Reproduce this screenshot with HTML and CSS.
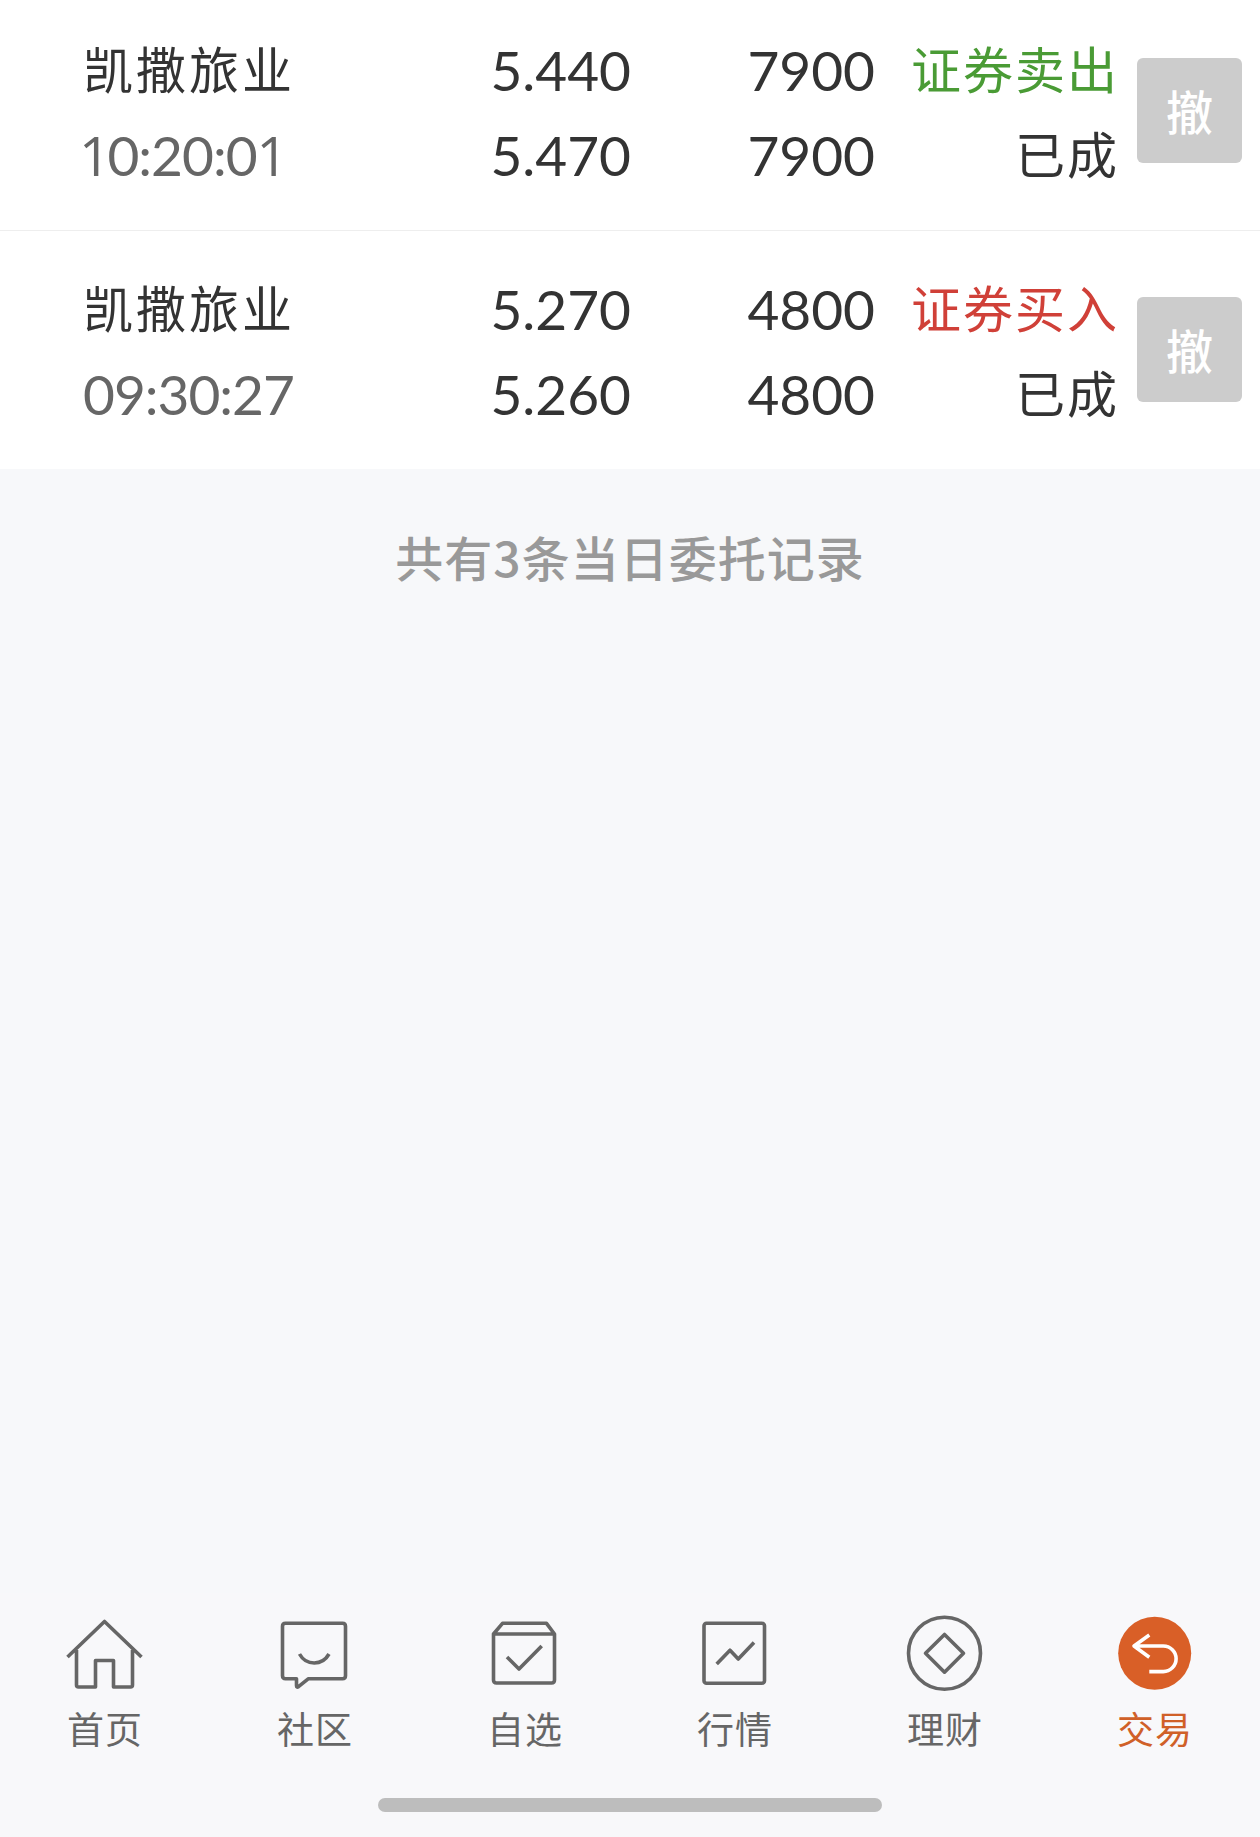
FILE: index.html
```html
<!DOCTYPE html>
<html lang="zh-CN">
<head>
	<meta charset="UTF-8">
	<title>当日委托</title>
	<link rel="stylesheet" href="styles.css">
</head>
<body>
	<div class="page">
		<ul class="order-list">
			<li class="order">
				<div class="col-name">
					<p class="name">凯撒旅业</p>
					<p class="time"><i class="one first">1</i>0:20:0<i class="one">1</i></p>
				</div>
				<div class="col-price">
					<p>5.440</p>
					<p>5.470</p>
				</div>
				<div class="col-num">
					<p>7900</p>
					<p>7900</p>
				</div>
				<div class="col-type">
					<p class="sell">证券卖出</p>
					<p>已成</p>
				</div>
				<button class="cancel">撤</button>
			</li>
			<li class="order">
				<div class="col-name">
					<p class="name">凯撒旅业</p>
					<p class="time">09:30:27</p>
				</div>
				<div class="col-price">
					<p>5.270</p>
					<p>5.260</p>
				</div>
				<div class="col-num">
					<p>4800</p>
					<p>4800</p>
				</div>
				<div class="col-type">
					<p class="buy">证券买入</p>
					<p>已成</p>
				</div>
				<button class="cancel">撤</button>
			</li>
		</ul>
		<p class="total">共有3条当日委托记录</p>

		<div class="footer">
			<div class="tabbar">
				<a class="tab">
					<svg class="icon" viewBox="0 0 80 80">
						<path d="M2.500 44L39.500 8.500L76.500 44M11.500 37V72Q11.500 74 13.500 74H30.500V47.500H48.500V74H65.500Q67.500 74 67.500 72V37"/>
					</svg>
					<span>首页</span>
				</a>
				<a class="tab">
					<svg class="icon" viewBox="0 0 80 80">
						<path d="M10.500 10.300H67.500Q70.500 10.300 70.500 13.300V62.700Q70.500 65.700 67.500 65.700H33.500L23.500 73.700Q21.500 75 21.500 72.500V65.700H10.500Q7.500 65.700 7.500 62.700V13.300Q7.500 10.300 10.500 10.300Z"/>
						<path d="M24.500 41Q29.500 50 39.200 50T54 41"/>
					</svg>
					<span>社区</span>
				</a>
				<a class="tab">
					<svg class="icon" viewBox="0 0 80 80">
						<path d="M8.500 21L17.500 10.300H61.500L69.500 21V67Q69.500 70 66.500 70H11.500Q8.500 70 8.500 67ZM8.500 21H69.500"/>
						<path d="M22 44L34 56L56.700 33"/>
					</svg>
					<span>自选</span>
				</a>
				<a class="tab">
					<svg class="icon" viewBox="0 0 80 80">
						<rect x="9" y="10.300" width="60.500" height="60" rx="2.500"/>
						<path d="M21.700 51L35 37.200L43.300 46L59 29.500"/>
					</svg>
					<span>行情</span>
				</a>
				<a class="tab">
					<svg class="icon" viewBox="0 0 80 80">
						<circle cx="39.500" cy="40.300" r="36"/>
						<path d="M39.500 21.500L58.500 40.300L39.500 59.200L20.500 40.300Z"/>
					</svg>
					<span>理财</span>
				</a>
				<a class="tab active">
					<svg class="icon" viewBox="0 0 80 80">
						<circle cx="39.700" cy="40.300" r="36.500"/>
						<path d="M34.300 22L19 33L34.300 44.300M19 33H48.300A12.800 12.800 0 0 1 48.300 58.600H34.300"/>
					</svg>
					<span>交易</span>
				</a>
			</div>
			<div class="home-bar"></div>
		</div>
	</div>
</body>
</html>
```
FILE: styles.css
```css
html,body,div,ul,li,p,a,span,i{
	padding: 0;
	margin: 0;
	border: 0;
}
body{
	background-color: #f7f8fa;
	color: #333;
	font-family: Lato, "Noto Sans CJK SC", sans-serif;
}
i{
	font-style: normal;
}
.page{
	display: flex;
	flex-direction: column;
	height: 1837px;
	overflow: hidden;
}
.order-list{
	list-style: none;
	background-color: #fff;
}
/* 委托记录 */
.order{
	display: flex;
	box-sizing: border-box;
	height: 238px;
	padding: 36px 18px 0 83px;
	font-size: 55px;
	line-height: 85px;
}
.order:first-child{
	height: 231px;
	padding-top: 28px;
	border-bottom: 1px solid #eee;
}
.col-name{
	width: 300px;
}
.name{
	font-size: 50px;
	letter-spacing: 3px;
}
.time{
	color: #666;
	letter-spacing: -1px;
	white-space: nowrap;
}
.one{
	font-family: "Open Sans", sans-serif;
	line-height: 1;
}
.first{
	margin-left: -4px;
	margin-right: -2px;
}
.col-price{
	width: 248px;
	text-align: right;
}
.col-num{
	width: 244px;
	text-align: right;
}
.col-type{
	width: 244px;
	font-size: 50px;
	letter-spacing: 2px;
	text-align: right;
}
.sell{
	color: #4a9b35;
}
.buy{
	color: #d04038;
}
.cancel{
	width: 105px;
	height: 105px;
	margin: 30px 0 0 auto;
	padding: 0 0 2px;
	border: 0;
	border-radius: 6px;
	background-color: #ccc;
	color: #fff;
	font-family: "Noto Sans CJK SC", sans-serif;
	font-size: 47px;
	font-weight: 500;
}
.total{
	padding-top: 52px;
	color: #999;
	font-family: "Noto Sans CJK SC", sans-serif;
	font-size: 48px;
	font-weight: 500;
	line-height: 70px;
	letter-spacing: 1px;
	text-align: center;
}
/* 底部导航 */
.footer{
	margin-top: auto;
	padding-top: 20px;
	background-color: #f8f8fa;
}
.tabbar{
	display: flex;
}
.tab{
	display: flex;
	flex: 1;
	flex-direction: column;
	align-items: center;
	color: #666;
	font-family: "Noto Sans CJK SC", sans-serif;
	font-size: 37px;
	line-height: 50px;
	letter-spacing: 1px;
}
.icon{
	width: 80px;
	height: 80px;
	margin-bottom: 10px;
	fill: none;
	stroke: #666;
	stroke-width: 3.6;
	stroke-linejoin: round;
}
.active{
	color: #d06028;
}
.active .icon{
	stroke: #fff;
}
.active circle{
	fill: #d95f27;
	stroke: none;
}
.home-bar{
	width: 504px;
	height: 14px;
	margin: 45px auto 25px;
	border-radius: 7px;
	background-color: #bdbdbd;
}
```
